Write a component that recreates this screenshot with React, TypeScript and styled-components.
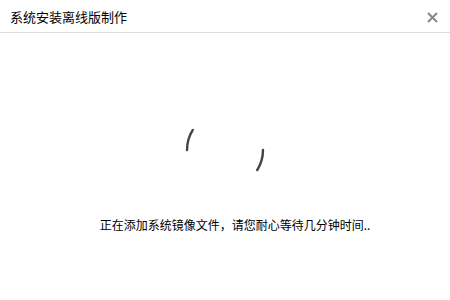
import React from "react";
import styled, {createGlobalStyle} from "styled-components";

const GlobalStyle = createGlobalStyle`
    html, body {
        margin: 0;
        padding: 0;
        background: #fff;
    }
    body {
        font-family: "Noto Sans CJK SC", "Liberation Sans", sans-serif;
    }
`;

const Dialog = styled.div`
    width: 450px;
    height: 300px;
    display: flex;
    flex-direction: column;
    background: #fff;
`;

const Header = styled.div`
    height: 32px;
    display: flex;
    align-items: center;
    justify-content: space-between;
    padding: 0 11px 0 10px;
    border-bottom: 1px solid #dedede;
`;

const Title = styled.div`
    font-size: 13px;
    color: #000;
`;

const CloseButton = styled.button`
    width: 14px;
    height: 14px;
    padding: 0;
    border: 0;
    background: none;
    display: flex;
    align-items: center;
    justify-content: center;
    cursor: pointer;
    margin-top: 2px;
`;

const Body = styled.div`
    flex: 1;
    display: flex;
    flex-direction: column;
    align-items: center;
    padding-top: 77px;
`;

const Spinner = styled.svg`
    width: 80px;
    height: 80px;
    display: block;
`;

const Message = styled.div`
    margin-top: 27px;
    padding-left: 20px;
    font-size: 12px;
    line-height: 16px;
    color: #000;
`;

const App = () => (
    <Dialog>
        <GlobalStyle/>
        <Header>
            <Title>系统安装离线版制作</Title>
            <CloseButton aria-label="关闭">
                <svg width="11" height="11" viewBox="0 0 11 11">
                    <path d="M1 1 L10 10 M10 1 L1 10" stroke="#888" strokeWidth="2"/>
                </svg>
            </CloseButton>
        </Header>
        <Body>
            <Spinner viewBox="0 0 80 80">
                <path d="M2 40 A38 38 0 0 1 7.8 19.9" fill="none" stroke="#444" strokeWidth="2.4" strokeLinecap="round"/>
                <path d="M78 40 A38 38 0 0 1 72.2 60.1" fill="none" stroke="#444" strokeWidth="2.4" strokeLinecap="round"/>
            </Spinner>
            <Message>正在添加系统镜像文件，请您耐心等待几分钟时间..</Message>
        </Body>
    </Dialog>
);

export default App;
